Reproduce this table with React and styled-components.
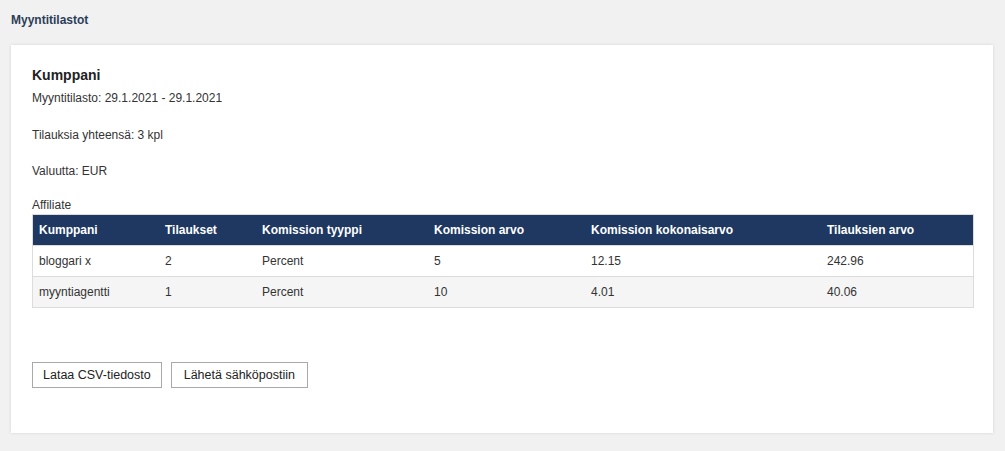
import React from "react";
import styled, { createGlobalStyle } from "styled-components";

const GlobalStyle = createGlobalStyle`
  html, body {
    margin: 0;
    padding: 0;
    background: #f1f1f1;
    font-family: "Liberation Sans", Arial, sans-serif;
    color: #333;
  }
`;

const Page = styled.div`
  padding: 13px 12px 18px 11px;
`;

const PageTitle = styled.h1`
  margin: 0 0 18px;
  font-size: 12px;
  font-weight: bold;
  color: #2b3d58;
  line-height: 14px;
`;

const Card = styled.div`
  background: #fff;
  box-shadow: 0 0 3px rgba(0, 0, 0, 0.12);
  padding: 22px 21px 45px 21px;
`;

const Heading = styled.h2`
  margin: 0 0 8px;
  font-size: 14px;
  font-weight: bold;
  color: #222;
  line-height: 16px;
`;

const Line = styled.p`
  margin: 0 0 ${(p) => p.gap || 22}px;
  font-size: 12px;
  line-height: 14px;
  color: #333;
`;

const Caption = styled.div`
  font-size: 12px;
  line-height: 14px;
  color: #333;
  margin-bottom: 2px;
`;

const Table = styled.table`
  width: 100%;
  border-collapse: collapse;
  table-layout: fixed;
  border: 1px solid #dcdcdc;
  font-size: 12px;
`;

const Th = styled.th`
  background: #1e3861;
  color: #fff;
  text-align: left;
  font-weight: bold;
  height: 30px;
  padding: 0 6px;
  width: ${(p) => p.w}px;
`;

const Row = styled.tr`
  background: ${(p) => (p.alt ? "#f5f5f5" : "#fff")};
  border-top: 1px solid #dcdcdc;
`;

const Td = styled.td`
  height: 30px;
  padding: 0 6px;
  color: #333;
`;

const Actions = styled.div`
  display: flex;
  gap: 9px;
  margin-top: 54px;
`;

const Button = styled.button`
  height: 26px;
  padding: 0 ${(p) => p.px || 10}px;
  background: #fff;
  border: 1px solid #a9a9a9;
  font-family: "Liberation Sans", Arial, sans-serif;
  font-size: 12.5px;
  color: #222;
  cursor: pointer;
`;

const columns = [
  { label: "Kumppani", w: 114 },
  { label: "Tilaukset", w: 85 },
  { label: "Komission tyyppi", w: 160 },
  { label: "Komission arvo", w: 145 },
  { label: "Komission kokonaisarvo", w: 224 },
  { label: "Tilauksien arvo", w: 140 },
];

const rows = [
  ["bloggari x", "2", "Percent", "5", "12.15", "242.96"],
  ["myyntiagentti", "1", "Percent", "10", "4.01", "40.06"],
];

export default function App() {
  return (
    <Page>
      <GlobalStyle />
      <PageTitle>Myyntitilastot</PageTitle>
      <Card>
        <Heading>Kumppani</Heading>
        <Line gap={23}>Myyntitilasto: 29.1.2021 - 29.1.2021</Line>
        <Line>Tilauksia yhteensä: 3 kpl</Line>
        <Line gap={20}>Valuutta: EUR</Line>
        <Caption>Affiliate</Caption>
        <Table>
          <thead>
            <tr>
              {columns.map((c) => (
                <Th key={c.label} w={c.w}>
                  {c.label}
                </Th>
              ))}
            </tr>
          </thead>
          <tbody>
            {rows.map((r, i) => (
              <Row key={r[0]} alt={i % 2 === 1}>
                {r.map((cell, j) => (
                  <Td key={j}>{cell}</Td>
                ))}
              </Row>
            ))}
          </tbody>
        </Table>
        <Actions>
          <Button>Lataa CSV-tiedosto</Button>
          <Button px={12}>Lähetä sähköpostiin</Button>
        </Actions>
      </Card>
    </Page>
  );
}
